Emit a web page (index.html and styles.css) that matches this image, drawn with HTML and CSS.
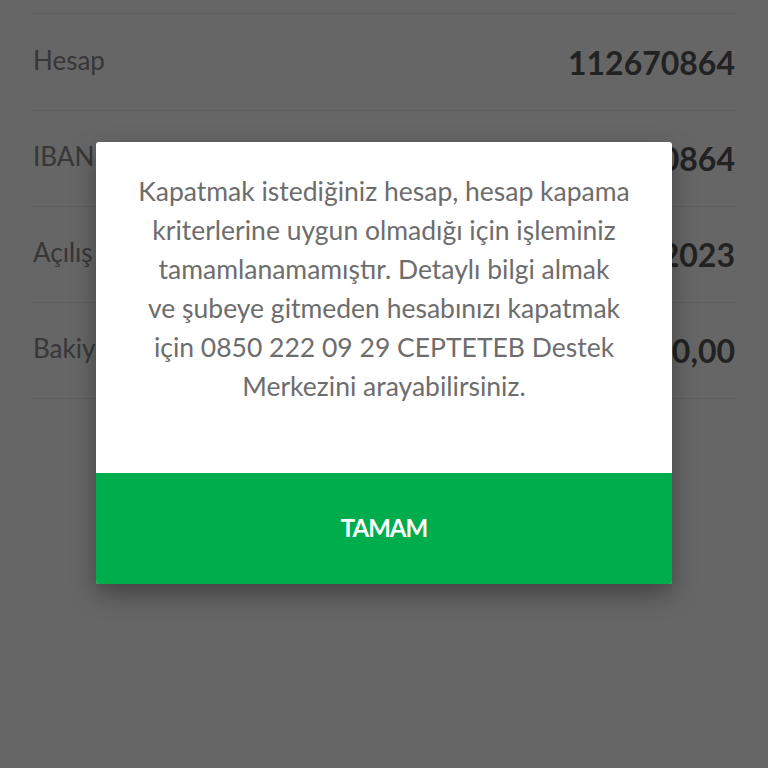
FILE: index.html
```html
<!DOCTYPE html>
<html lang="tr">
<head>
    <meta charset="UTF-8">
    <meta name="viewport" content="width=device-width, initial-scale=1.0">
    <title>Hesap Detayı</title>
    <link rel="stylesheet" href="styles.css">
</head>
<body>
    <div class="details">
        <div class="row">
            <span class="label">Hesap</span>
            <span class="value">112670864</span>
        </div>
        <div class="row">
            <span class="label">IBAN</span>
            <span class="value">TR12 0003 2000 0000 0112 670864</span>
        </div>
        <div class="row">
            <span class="label">Açılış Tarihi</span>
            <span class="value">14.02.2023</span>
        </div>
        <div class="row">
            <span class="label">Bakiye</span>
            <span class="value">0,00</span>
        </div>
    </div>

    <div class="overlay">
        <div class="dialog">
            <p class="dialog-text">Kapatmak istediğiniz hesap, hesap kapama<br>
                kriterlerine uygun olmadığı için işleminiz<br>
                tamamlanamamıştır. Detaylı bilgi almak<br>
                ve şubeye gitmeden hesabınızı kapatmak<br>
                için 0850 222 09 29 CEPTETEB Destek<br>
                Merkezini arayabilirsiniz.</p>
            <button class="dialog-btn">TAMAM</button>
        </div>
    </div>
</body>
</html>
```

FILE: styles.css
```css
html, body {
    margin: 0;
    height: 100%;
}
body {
    font-family: Lato, "Open Sans", sans-serif;
    background-color: #fff;
    overflow: hidden;
}
.details {
    padding: 13px 33px 0;
}
.row {
    display: flex;
    justify-content: space-between;
    align-items: center;
    height: 95px;
    border-top: 1px solid #ebebeb;
    white-space: nowrap;
}
.row:first-child {
    height: 96px;
}
.row:last-child {
    border-bottom: 1px solid #ebebeb;
}
.label {
    font-size: 26px;
    color: #8a8a8a;
    padding-bottom: 5px;
}
.value {
    font-size: 32px;
    font-weight: 700;
    color: #555;
}
.overlay {
    position: absolute;
    inset: 0;
    background-color: rgba(0, 0, 0, 0.6);
    display: flex;
    justify-content: center;
    align-items: flex-start;
    padding-top: 142px;
}
.dialog {
    width: 576px;
    background-color: #fff;
    border-radius: 3px;
    overflow: hidden;
    box-shadow: 0 10px 24px rgba(0, 0, 0, 0.35);
}
.dialog-text {
    margin: 0;
    padding: 30px 20px 67px;
    font-size: 26.5px;
    line-height: 39px;
    color: #6d6d6d;
    text-align: center;
    white-space: nowrap;
}
.dialog-btn {
    display: block;
    width: 100%;
    height: 111px;
    padding-bottom: 4px;
    border: none;
    background-color: #00ad4c;
    color: #fff;
    font-family: inherit;
    font-size: 24px;
    font-weight: 700;
    letter-spacing: -1px;
    cursor: pointer;
}
```
